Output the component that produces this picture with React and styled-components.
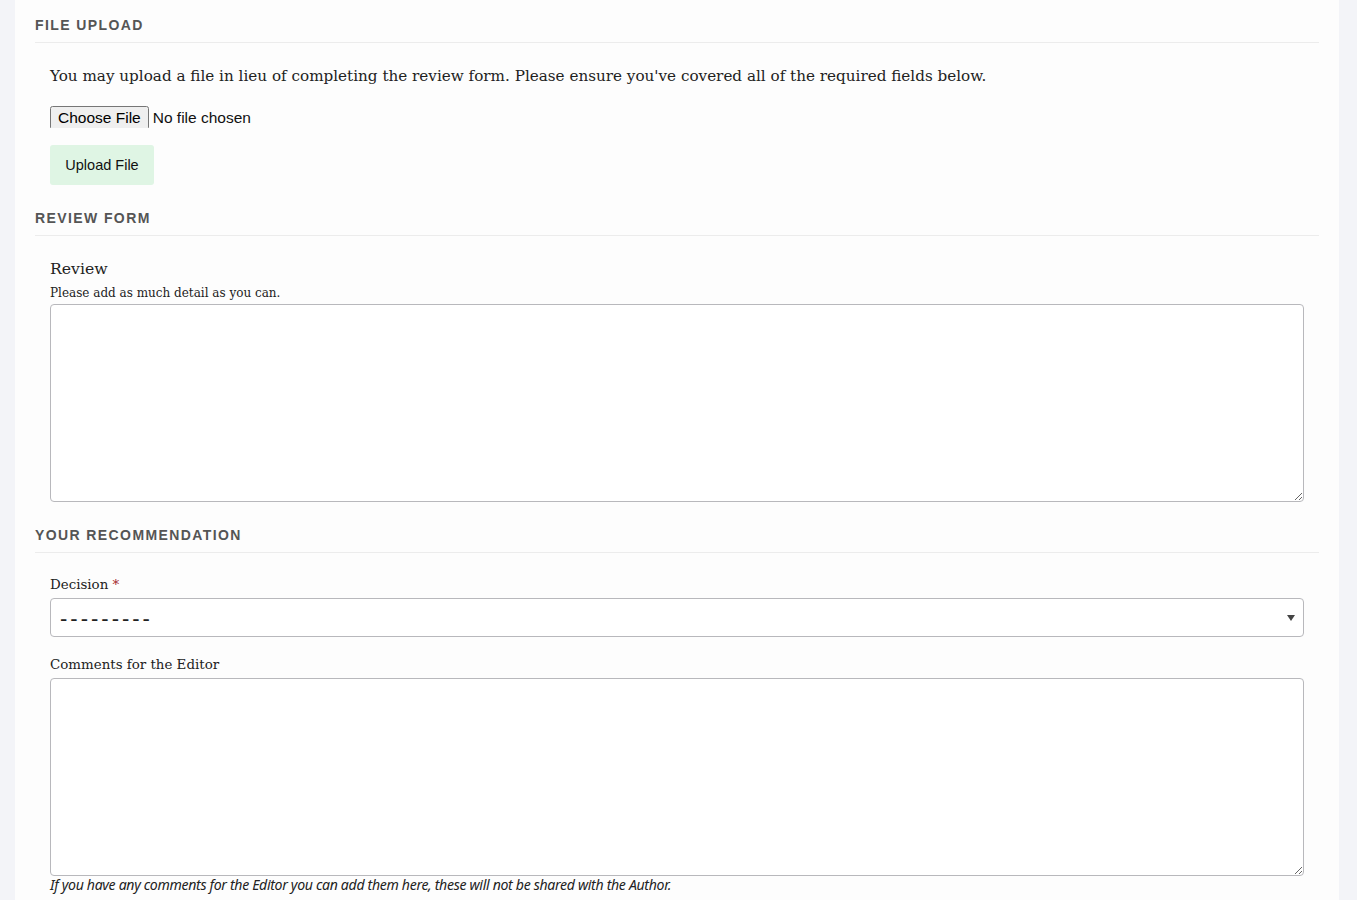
import React from "react";
import styled, { createGlobalStyle } from "styled-components";

const Global = createGlobalStyle`
  html, body { margin: 0; padding: 0; background: #f3f4f8; }
  body { font-family: "DejaVu Serif", "Liberation Serif", serif; color: #222; }
  * { box-sizing: border-box; }
`;

const Page = styled.div`
  padding: 0 18px 0 15px;
  min-height: 900px;
`;

const Panel = styled.main`
  background: #fdfdfd;
  padding: 0 20px 40px 20px;
  min-height: 900px;
`;

const Section = styled.section`
  display: flex;
  flex-direction: column;
`;

const SectionTitle = styled.h2`
  margin: 0;
  padding: ${(p) => p.$top}px 0 9px 0;
  font-family: "Liberation Sans", Arial, sans-serif;
  font-size: 14px;
  font-weight: 700;
  letter-spacing: 1.4px;
  text-transform: uppercase;
  color: #555;
  border-bottom: 1px solid #ececec;
  line-height: 16px;
`;

const Body = styled.div`
  padding: 0 15px;
  display: flex;
  flex-direction: column;
`;

const Intro = styled.p`
  margin: 23px 0 0 0;
  font-size: 15.2px;
  line-height: 20px;
  color: #222;
`;

const FileInput = styled.input`
  margin-top: 20px;
  font-family: "Liberation Sans", Arial, sans-serif;
  font-size: 15.5px;
  color: #111;
  width: 300px;
  height: 22px;
`;

const UploadButton = styled.button`
  align-self: flex-start;
  margin-top: 17px;
  margin-bottom: 25px;
  width: 104px;
  height: 40px;
  border: none;
  border-radius: 3px;
  background: #dff5e4;
  color: #111;
  font-family: "Liberation Sans", Arial, sans-serif;
  font-size: 14.5px;
  cursor: pointer;
`;

const FieldLabel = styled.label`
  display: block;
  font-size: ${(p) => (p.$large ? "15.7px" : "13.4px")};
  line-height: 20px;
  color: #222;
  margin-top: ${(p) => p.$mt}px;
`;

const Required = styled.span`
  color: #a4262c;
`;

const Hint = styled.div`
  font-size: 12px;
  line-height: 16px;
  color: #222;
  margin-top: 6px;
  margin-bottom: 3px;
`;

const TextArea = styled.textarea`
  display: block;
  width: 100%;
  height: 198px;
  margin: 0;
  border: 1px solid #b8b8bc;
  border-radius: 4px;
  background: #fff;
  resize: vertical;
  font-family: inherit;
  font-size: 14px;
`;

const SelectWrap = styled.div`
  position: relative;
  margin-top: 3px;
`;

const Select = styled.select`
  display: block;
  width: 100%;
  height: 39px;
  padding: 2px 30px 0 9px;
  appearance: none;
  -webkit-appearance: none;
  border: 1px solid #b8b8bc;
  border-radius: 4px;
  background: #fff;
  font-family: "Liberation Sans", Arial, sans-serif;
  font-size: 22px;
  letter-spacing: 3px;
  font-weight: 300;
  color: #222;
`;

const Arrow = styled.span`
  position: absolute;
  right: 9px;
  top: 17px;
  width: 0;
  height: 0;
  border-left: 4px solid transparent;
  border-right: 4px solid transparent;
  border-top: 6px solid #444;
  pointer-events: none;
`;

const HelpText = styled.div`
  margin-top: 1px;
  font-family: "Noto Sans", "Open Sans", sans-serif;
  font-style: italic;
  font-size: 14.1px;
  letter-spacing: -0.32px;
  line-height: 16px;
  color: #222;
`;

export default function App() {
  return (
    <>
      <Global />
      <Page>
        <Panel>
          <Section>
            <SectionTitle $top={17}>File Upload</SectionTitle>
            <Body>
              <Intro>
                You may upload a file in lieu of completing the review form. Please ensure you've covered all of the required fields below.
              </Intro>
              <FileInput type="file" />
              <UploadButton type="button">Upload File</UploadButton>
            </Body>
          </Section>
          <Section>
            <SectionTitle $top={0}>Review Form</SectionTitle>
            <Body>
              <FieldLabel $large $mt={23}>Review</FieldLabel>
              <Hint>Please add as much detail as you can.</Hint>
              <TextArea />
            </Body>
          </Section>
          <Section>
            <SectionTitle $top={25}>Your Recommendation</SectionTitle>
            <Body>
              <FieldLabel $mt={22}>
                Decision <Required>*</Required>
              </FieldLabel>
              <SelectWrap>
                <Select defaultValue="">
                  <option value="">---------</option>
                  <option value="accept">Accept</option>
                  <option value="minor">Minor Revisions</option>
                  <option value="major">Major Revisions</option>
                  <option value="reject">Reject</option>
                </Select>
                <Arrow />
              </SelectWrap>
              <FieldLabel $mt={18}>Comments for the Editor</FieldLabel>
              <SelectWrap>
                <TextArea />
              </SelectWrap>
              <HelpText>
                If you have any comments for the Editor you can add them here, these will not be shared with the Author.
              </HelpText>
            </Body>
          </Section>
        </Panel>
      </Page>
    </>
  );
}
